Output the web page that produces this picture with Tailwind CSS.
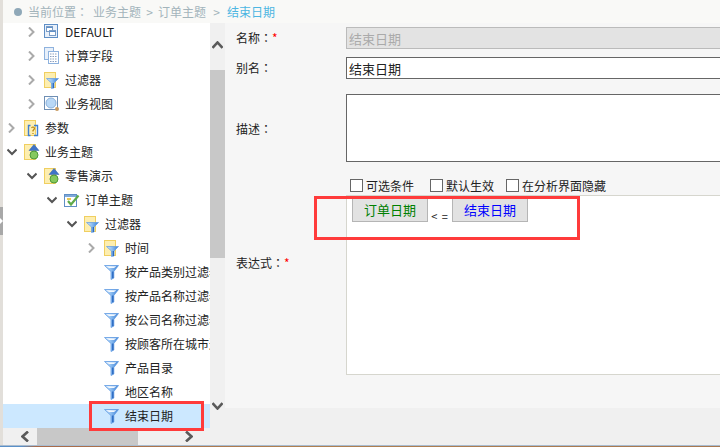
<!DOCTYPE html>
<html>
<head>
<meta charset="utf-8">
<script src="https://cdn.jsdelivr.net/npm/@tailwindcss/browser@4"></script>
</head>
<body class="bg-[#f0f0f0]">
<svg class="absolute w-0 h-0">
    <defs>
        <linearGradient id="fg" x1="0" y1="0" x2="1" y2="0">
            <stop offset="0" stop-color="#d6e8fb"/>
            <stop offset="0.45" stop-color="#8fc0f2"/>
            <stop offset="1" stop-color="#3a7ed4"/>
        </linearGradient>
    </defs>
    <symbol id="ch-r" viewBox="0 0 10 10"><path d="M2 0.5 L6.5 5 L2 9.5" fill="none" stroke="#aaa" stroke-width="2"/></symbol>
    <symbol id="ch-d" viewBox="0 0 10 10"><path d="M0.5 2.5 L5 7 L9.5 2.5" fill="none" stroke="#555" stroke-width="2"/></symbol>
    <symbol id="funnel" viewBox="0 0 16 18">
        <path d="M0.5 2.5 H14.5 L9.8 8.5 V15 L7 16.5 V8.5 Z" fill="url(#fg)" stroke="#5f9ae2" stroke-width="0.8"/>
        <path d="M2.5 3.3 H12.5 L10 5 H5 Z" fill="#fff" opacity="0.9"/>
        <path d="M8.8 8.5 V15.3" stroke="#2a68c0" stroke-width="1.4"/>
    </symbol>
    <symbol id="folder-filter" viewBox="0 0 16 18">
        <rect x="0.5" y="1.5" width="11" height="15" fill="#fdeeb0" stroke="#f0cf60"/>
        <path d="M2.5 7.5 H14.5 L10 12 V17 L7.5 17.5 V12 Z" fill="url(#fg)" stroke="#5f9ae2" stroke-width="0.7"/>
        <path d="M9.3 12 V17" stroke="#2a68c0" stroke-width="1.3"/>
    </symbol>
    <symbol id="default" viewBox="0 0 16 18">
        <rect x="0.5" y="1.5" width="13" height="13" fill="#e8f0fa" stroke="#5f8fc6"/>
        <rect x="2.5" y="3.5" width="6" height="5" fill="#fff" stroke="#7a9cc6"/>
        <rect x="5.5" y="7.5" width="6" height="5" fill="#fff" stroke="#7a9cc6"/>
        <path d="M2.5 4.5 H8.5 M5.5 8.5 H11.5" stroke="#5f8fc6"/>
    </symbol>
    <symbol id="calc" viewBox="0 0 16 18">
        <rect x="0.5" y="0.5" width="9" height="12" fill="#e8f0fa" stroke="#8eb2de"/>
        <rect x="4.5" y="4.5" width="10" height="12" fill="#fff" stroke="#8eb2de"/>
        <path d="M6 7 H13 M6 9.5 H13 M6 12 H13 M6 14.5 H13" stroke="#8a9fc0" stroke-dasharray="1.5 1"/>
    </symbol>
    <symbol id="view" viewBox="0 0 16 18">
        <rect x="0.5" y="1.5" width="13" height="13" fill="#fff" stroke="#6f8fb4"/>
        <circle cx="7" cy="8" r="5" fill="#b9d8f6" stroke="#8ab0da"/>
        <circle cx="13" cy="14" r="2" fill="#c89a60"/>
    </symbol>
    <symbol id="param" viewBox="0 0 16 18">
        <rect x="0.5" y="1.5" width="11" height="15" fill="#fdeeb0" stroke="#f0cf60"/>
        <path d="M6.5 6.5 H4.5 V16.5 H6.5 M10 6.5 H13.5 V16.5 H10" fill="none" stroke="#3f7fd0" stroke-width="1.4"/>
        <path d="M7.5 9 Q9 7 10.5 9 Q10.5 10.5 9 11.5 V12.5 M9 14 V15" fill="none" stroke="#b8860b" stroke-width="1.2"/>
    </symbol>
    <symbol id="biz" viewBox="0 0 16 18">
        <rect x="0.5" y="1.5" width="11" height="15" fill="#fdeeb0" stroke="#f0cf60"/>
        <path d="M5 7.5 L10 1.5 L15 7.5 Z" fill="#3f74c8" stroke="#2f5fa8" stroke-width="0.5"/>
        <circle cx="10" cy="12" r="4" fill="#86c95e" stroke="#4f9a3a"/>
    </symbol>
    <symbol id="theme" viewBox="0 0 16 18">
        <rect x="0.5" y="3.5" width="12" height="12" fill="#fff" stroke="#5f8fc6"/>
        <rect x="1" y="4" width="11" height="2" fill="#7fa8d8"/>
        <path d="M3 8 H7" stroke="#e8c850" stroke-width="2"/>
        <path d="M4 10 L7 13.5 L14.5 4.5" fill="none" stroke="#5faa4a" stroke-width="2.2"/>
    </symbol>
</svg>

<div class="relative flex w-[720px] h-[447px] overflow-hidden font-['Noto_Sans_CJK_SC','Liberation_Sans',sans-serif] text-[12px] leading-4 text-[#222]">
    <!-- left splitter -->
    <div class="w-[3px] shrink-0 bg-[#e2dfda] pt-[207px]">
        <div class="w-[3px] h-[28px] bg-[#a8a8a8] flex items-center">
            <div class="w-0 h-0 border-y-[3px] border-y-transparent border-l-[3px] border-l-white"></div>
        </div>
    </div>

    <div class="flex-1 flex flex-col min-w-0">
        <!-- breadcrumb -->
        <div class="h-[23px] shrink-0 flex items-center bg-[#f9f9f7] text-[#a3b4bb] relative z-10">
            <span class="w-2 h-2 rounded-full bg-[#8fa8b8] ml-[11px] mr-[6px]"></span>
            <span>当前位置<span class="font-['Noto_Sans_CJK_TC']">：</span></span>
            <span class="ml-[5px]">业务主题</span>
            <span class="w-[17px] text-center">&gt;</span>
            <span>订单主题</span>
            <span class="w-[21px] text-center">&gt;</span>
            <span class="text-[#4db6e2]">结束日期</span>
        </div>

        <div class="flex-1 flex min-h-0">
            <!-- tree side -->
            <div class="w-[222px] shrink-0 flex flex-col">
                <div class="flex h-[405px]">
                    <div class="w-[207px] bg-white overflow-hidden whitespace-nowrap">
                        <div class="-mt-[3px]">
                            <div class="flex items-center h-6 pl-[24px]"><svg class="w-[10px] h-[10px] mr-[7px] shrink-0"><use href="#ch-r"/></svg><svg class="w-4 h-[18px] mr-[5px] shrink-0"><use href="#default"/></svg><span>DEFAULT</span></div>
                            <div class="flex items-center h-6 pl-[24px]"><svg class="w-[10px] h-[10px] mr-[7px] shrink-0"><use href="#ch-r"/></svg><svg class="w-4 h-[18px] mr-[5px] shrink-0"><use href="#calc"/></svg><span>计算字段</span></div>
                            <div class="flex items-center h-6 pl-[24px]"><svg class="w-[10px] h-[10px] mr-[7px] shrink-0"><use href="#ch-r"/></svg><svg class="w-4 h-[18px] mr-[5px] shrink-0"><use href="#folder-filter"/></svg><span>过滤器</span></div>
                            <div class="flex items-center h-6 pl-[24px]"><svg class="w-[10px] h-[10px] mr-[7px] shrink-0"><use href="#ch-r"/></svg><svg class="w-4 h-[18px] mr-[5px] shrink-0"><use href="#view"/></svg><span>业务视图</span></div>
                            <div class="flex items-center h-6 pl-[4px]"><svg class="w-[10px] h-[10px] mr-[7px] shrink-0"><use href="#ch-r"/></svg><svg class="w-4 h-[18px] mr-[5px] shrink-0"><use href="#param"/></svg><span>参数</span></div>
                            <div class="flex items-center h-6 pl-[4px]"><svg class="w-[10px] h-[10px] mr-[7px] shrink-0"><use href="#ch-d"/></svg><svg class="w-4 h-[18px] mr-[5px] shrink-0"><use href="#biz"/></svg><span>业务主题</span></div>
                            <div class="flex items-center h-6 pl-[24px]"><svg class="w-[10px] h-[10px] mr-[7px] shrink-0"><use href="#ch-d"/></svg><svg class="w-4 h-[18px] mr-[5px] shrink-0"><use href="#biz"/></svg><span>零售演示</span></div>
                            <div class="flex items-center h-6 pl-[44px]"><svg class="w-[10px] h-[10px] mr-[7px] shrink-0"><use href="#ch-d"/></svg><svg class="w-4 h-[18px] mr-[5px] shrink-0"><use href="#theme"/></svg><span>订单主题</span></div>
                            <div class="flex items-center h-6 pl-[64px]"><svg class="w-[10px] h-[10px] mr-[7px] shrink-0"><use href="#ch-d"/></svg><svg class="w-4 h-[18px] mr-[5px] shrink-0"><use href="#folder-filter"/></svg><span>过滤器</span></div>
                            <div class="flex items-center h-6 pl-[84px]"><svg class="w-[10px] h-[10px] mr-[7px] shrink-0"><use href="#ch-r"/></svg><svg class="w-4 h-[18px] mr-[5px] shrink-0"><use href="#folder-filter"/></svg><span>时间</span></div>
                            <div class="flex items-center h-6 pl-[101px]"><svg class="w-4 h-[18px] mr-[5px] shrink-0"><use href="#funnel"/></svg><span>按产品类别过滤器</span></div>
                            <div class="flex items-center h-6 pl-[101px]"><svg class="w-4 h-[18px] mr-[5px] shrink-0"><use href="#funnel"/></svg><span>按产品名称过滤器</span></div>
                            <div class="flex items-center h-6 pl-[101px]"><svg class="w-4 h-[18px] mr-[5px] shrink-0"><use href="#funnel"/></svg><span>按公司名称过滤器</span></div>
                            <div class="flex items-center h-6 pl-[101px]"><svg class="w-4 h-[18px] mr-[5px] shrink-0"><use href="#funnel"/></svg><span>按顾客所在城市过滤器</span></div>
                            <div class="flex items-center h-6 pl-[101px]"><svg class="w-4 h-[18px] mr-[5px] shrink-0"><use href="#funnel"/></svg><span>产品目录</span></div>
                            <div class="flex items-center h-6 pl-[101px]"><svg class="w-4 h-[18px] mr-[5px] shrink-0"><use href="#funnel"/></svg><span>地区名称</span></div>
                            <div class="flex items-center h-6 pl-[101px] bg-[#cce8ff]"><svg class="w-4 h-[18px] mr-[5px] shrink-0"><use href="#funnel"/></svg><span>结束日期</span></div>
                        </div>
                    </div>
                    <!-- vertical scrollbar -->
                    <div class="w-[15px] bg-[#f0f0f0] flex flex-col">
                        <div class="h-[47px] flex justify-center pt-[18px]">
                            <svg class="w-[11px] h-[8px]" viewBox="0 0 11 8"><path d="M0.5 7 L5.5 1.5 L10.5 7" fill="none" stroke="#5a5a5a" stroke-width="2.6"/></svg>
                        </div>
                        <div class="h-[188px] bg-[#c8c8c8]"></div>
                        <div class="flex-1 flex justify-center items-end pb-[18px]">
                            <svg class="w-[11px] h-[8px]" viewBox="0 0 11 8"><path d="M0.5 1 L5.5 6.5 L10.5 1" fill="none" stroke="#5a5a5a" stroke-width="2.6"/></svg>
                        </div>
                    </div>
                </div>
                <!-- horizontal scrollbar -->
                <div class="h-[17px] flex items-stretch bg-[#f0f0f0]">
                    <div class="w-[34px] flex items-center justify-end pr-[8px]">
                        <svg class="w-[8px] h-[11px]" viewBox="0 0 8 11"><path d="M7 0.5 L1.5 5.5 L7 10.5" fill="none" stroke="#5a5a5a" stroke-width="2.6"/></svg>
                    </div>
                    <div class="w-[101px] bg-[#c8c8c8]"></div>
                    <div class="w-[55px] flex items-center justify-end">
                        <svg class="w-[8px] h-[11px]" viewBox="0 0 8 11"><path d="M1 0.5 L6.5 5.5 L1 10.5" fill="none" stroke="#5a5a5a" stroke-width="2.6"/></svg>
                    </div>
                </div>
            </div>

            <!-- form side -->
            <div class="flex-1 min-w-0 flex flex-col text-[#333]">
                <div class="flex-1 bg-[#f6f6f6] pt-[4px] overflow-hidden">
                    <div class="grid grid-cols-[121px_376px]">
                        <label class="pl-[11px] flex items-center h-[22px] text-[#222]">名称<span class="font-['Noto_Sans_CJK_TC']">：</span><span class="text-[#f00]">*</span></label>
                        <input disabled value="结束日期" class="h-[22px] px-[2px] bg-[#e3e3e3] border border-[#bbb] text-[13px] text-[#aaa] outline-none">

                        <label class="pl-[11px] mt-[8px] flex items-center h-[22px] text-[#222]">别名<span class="font-['Noto_Sans_CJK_TC']">：</span></label>
                        <input value="结束日期" class="mt-[8px] h-[22px] px-[2px] bg-white border border-[#666] text-[13px] text-[#222] outline-none">

                        <label class="pl-[11px] mt-[15px] pt-[2px] flex items-center h-[68px] text-[#222]">描述<span class="font-['Noto_Sans_CJK_TC']">：</span></label>
                        <textarea class="mt-[15px] h-[68px] bg-white border border-[#666] resize-none outline-none"></textarea>

                        <div></div>
                        <div class="mt-[17px] h-[13px] flex items-center pl-[4px] text-[#222]">
                            <input type="checkbox" class="appearance-none w-[13px] h-[13px] bg-white border border-[#666] mr-[3px]"><span>可选条件</span>
                            <input type="checkbox" class="appearance-none w-[13px] h-[13px] bg-white border border-[#666] ml-[16px] mr-[3px]"><span>默认生效</span>
                            <input type="checkbox" class="appearance-none w-[13px] h-[13px] bg-white border border-[#666] ml-[12px] mr-[3px]"><span>在分析界面隐藏</span>
                        </div>

                        <label class="pl-[11px] mt-[3px] pt-[60px] whitespace-nowrap text-[#222]">表达式<span class="font-['Noto_Sans_CJK_TC']">：</span><span class="text-[#f00]">*</span></label>
                        <div class="mt-[3px] h-[180px] bg-white border-y border-l border-[#d6d6ce] pl-[5px] pt-[2px] flex items-start">
                            <button class="w-[76px] h-[24px] bg-[#e2e2e2] border border-[#b5b5b5] text-[13px] text-[#008000]">订单日期</button>
                            <span class="w-[24px] mt-[10px] text-center text-[11px] tracking-[1px] text-[#222]">&lt; =</span>
                            <button class="w-[76px] h-[24px] bg-[#e2e2e2] border border-[#b5b5b5] text-[13px] text-[#0000ff]">结束日期</button>
                        </div>
                    </div>
                </div>
                <div class="h-[37px] shrink-0 bg-[#f0f0f0]"></div>
            </div>
        </div>

        <div class="h-[2px]"></div>
    </div>

    <!-- taskbar sliver of the desktop behind -->
    <div class="absolute left-0 right-0 bottom-0 h-[2px] border-t border-[#a9bcd0] bg-[linear-gradient(90deg,#5a90c8_0%,#5a90c8_3%,#a86a4a_5%,#b08050_40%,#a87850_100%)]"></div>

    <!-- red annotations -->
    <div class="absolute left-[89px] top-[401px] w-[115px] h-[30px] border-[3px] border-[#ff3b3b]"></div>
    <div class="absolute left-[314px] top-[196px] w-[266px] h-[44px] border-[3px] border-[#ff3b3b]"></div>
</div>
</body>
</html>
